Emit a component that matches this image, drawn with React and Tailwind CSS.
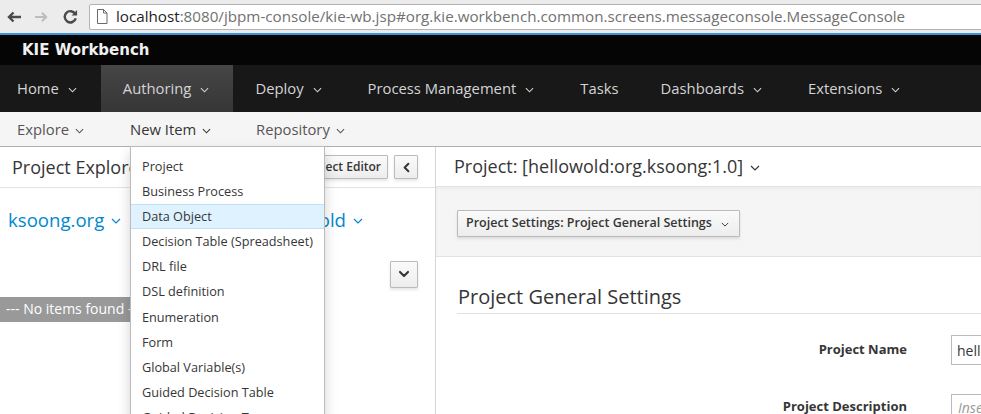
import { ChevronDown, ChevronLeft } from 'lucide-react'

const NAV = [
  { label: 'Home', menu: true },
  { label: 'Authoring', menu: true, active: true },
  { label: 'Deploy', menu: true },
  { label: 'Process Management', menu: true },
  { label: 'Tasks', menu: false },
  { label: 'Dashboards', menu: true },
  { label: 'Extensions', menu: true },
]

const NEW_ITEMS = [
  'Project',
  'Business Process',
  'Data Object',
  'Decision Table (Spreadsheet)',
  'DRL file',
  'DSL definition',
  'Enumeration',
  'Form',
  'Global Variable(s)',
  'Guided Decision Table',
  'Guided Decision Tree',
  'Guided Rule',
]

function Caret({ className = '' }) {
  return (
    <svg viewBox="0 0 10 6" className={className} fill="none" stroke="currentColor" strokeWidth="1.2">
      <path d="M1 1l4 4 4-4" />
    </svg>
  )
}

function BrowserBar() {
  return (
    <div className="h-[33px] bg-[#ececec] flex items-center">
      <div className="w-[89px] flex items-center shrink-0">
        {/* back */}
        <svg viewBox="0 0 16 12" className="w-[16px] h-[12px] ml-[6px]" fill="none" stroke="#4a4a4a" strokeWidth="2.4">
          <path d="M15 6H3M7.5 1.5L3 6l4.5 4.5" />
        </svg>
        {/* forward */}
        <svg viewBox="0 0 16 12" className="w-[15px] h-[12px] ml-[12px]" fill="none" stroke="#bdbdbd" strokeWidth="2.2">
          <path d="M1 6h12M8.5 1.5L13 6l-4.5 4.5" />
        </svg>
        {/* reload */}
        <svg viewBox="0 0 16 16" className="w-[15px] h-[15px] ml-[14px]" fill="none" stroke="#4a4a4a" strokeWidth="2.6">
          <path d="M13 5.2A6 6 0 1 0 13.6 10" />
          <path d="M15 1v5.8H9.2z" fill="#4a4a4a" stroke="none" />
        </svg>
      </div>
      <div className="h-[26px] flex-1 mr-[-4px] bg-white border border-[#b3b3b3] rounded-[2px] flex items-center">
        <svg viewBox="0 0 12 15" className="w-[12px] h-[15px] ml-[6px]" fill="#fff" stroke="#6a6a6a" strokeWidth="1">
          <path d="M1.5 0.5h6l3.5 3.5v10.5h-9.5z" />
          <path d="M7.5 0.5v3.5h3.5" fill="none" />
        </svg>
        <span className="ml-[8px] text-[15.2px] whitespace-nowrap font-['Open_Sans',sans-serif]">
          <span className="text-[#1e1e1e]">localhost</span>
          <span className="text-[#717171]">:8080/jbpm-console/kie-wb.jsp#org.kie.workbench.common.screens.messageconsole.MessageConsole</span>
        </span>
      </div>
    </div>
  )
}

function Btn({ children, className = '' }) {
  return (
    <div
      className={
        'flex items-center justify-center border border-[#bbb] rounded-[1px] bg-linear-to-b from-[#fafafa] to-[#ededed] shadow-[0_2px_3px_rgba(3,3,3,0.1)] text-[#363636] ' +
        className
      }
    >
      {children}
    </div>
  )
}

export default function App() {
  return (
    <div className="w-[981px] h-[414px] overflow-hidden bg-white font-['Open_Sans',sans-serif] text-[#363636]">
      <BrowserBar />
      <div className="h-[2px] bg-[#3a93dc]" />
      <div className="h-[30px] bg-[#050505] flex items-center pl-[22px]">
        <span className="font-['DejaVu_Sans',sans-serif] font-bold text-[15px] text-[#f0f0f0] leading-none mt-[1px]">
          KIE Workbench
        </span>
      </div>

      {/* primary nav */}
      <nav className="h-[47px] bg-[#181818] flex text-[14.8px] text-[#d4d4d4]">
        {NAV.map((n, i) => (
          <div
            key={n.label}
            className={[
              'h-full flex items-center',
              i === 0 ? 'pl-[17px]' : 'pl-[22px]',
              n.menu ? 'pr-[24px]' : 'pr-[20px]',
              n.active ? 'bg-linear-to-b from-[#464646] to-[#363636]' : '',
            ].join(' ')}
          >
            <span>{n.label}</span>
            {n.menu && <Caret className="w-[9px] h-[6px] ml-[9px] mt-[2px]" />}
          </div>
        ))}
      </nav>

      {/* secondary nav */}
      <div className="h-[35px] bg-[#f5f5f5] border-b border-[#b0b0b0] flex text-[14.8px] text-[#555] pt-[1px]">
        <div className="w-[130px] pl-[17px] flex items-center">
          Explore
          <Caret className="w-[9px] h-[6px] ml-[6px] mt-[2px]" />
        </div>
        <div className="relative w-[126px] flex items-center text-[#363636]">
          New Item
          <Caret className="w-[9px] h-[6px] ml-[6px] mt-[2px]" />
          <div className="absolute left-0 top-[33px] z-10 w-[195px] bg-white border border-[#bbb] shadow-[0_6px_12px_rgba(0,0,0,0.175)] pt-[7px] text-[12.7px] text-[#363636]">
            {NEW_ITEMS.map((t) => (
              <div
                key={t}
                className={
                  'h-[25.1px] px-[11px] flex items-center border-y whitespace-nowrap ' +
                  (t === 'Data Object' ? 'bg-[#def3ff] border-[#bee1f4]' : 'border-transparent')
                }
              >
                {t}
              </div>
            ))}
          </div>
        </div>
        <div className="flex items-center">
          Repository
          <Caret className="w-[9px] h-[6px] ml-[6px] mt-[2px]" />
        </div>
      </div>

      <div className="flex h-[267px]">
        {/* project explorer */}
        <div className="w-[436px] shrink-0 border-r border-[#d6d6d6]">
          <div className="h-[41px] border-b border-[#e2e2e2] flex items-center pl-[12px] pr-[17px]">
            <span className="text-[18px] flex-1 whitespace-nowrap">Project Explorer</span>
            <Btn className="h-[24px] px-[6px] text-[12px] font-semibold">Project Editor</Btn>
            <Btn className="w-[24px] h-[24px] ml-[6px]">
              <ChevronLeft size={15} strokeWidth={3.2} />
            </Btn>
          </div>
          <div className="flex items-center justify-between pl-[8px] pr-[72px] pt-[18px] text-[18.6px] text-[#0088ce]">
            <div className="flex items-center">
              ksoong.org
              <Caret className="w-[10px] h-[6px] ml-[7px] mt-[3px]" />
            </div>
            <div className="flex items-center">
              hellowold
              <Caret className="w-[10px] h-[6px] ml-[7px] mt-[3px]" />
            </div>
          </div>
          <div className="flex justify-end pr-[17px] mt-[27px]">
            <Btn className="w-[28px] h-[27px]">
              <ChevronDown size={16} strokeWidth={3.2} />
            </Btn>
          </div>
          <div className="mt-[9px] w-[160px] h-[25px] bg-[#999] text-white text-[14px] flex items-center pl-[6px] pb-[1px] whitespace-nowrap">
            --- No items found ---
          </div>
        </div>

        {/* project editor */}
        <div className="flex-1 min-w-0 overflow-hidden">
          <div className="h-[40px] border-b border-[#e2e2e2] flex items-center pl-[18px] text-[18px] whitespace-nowrap">
            Project: [hellowold:org.ksoong:1.0]
            <Caret className="w-[10px] h-[6px] ml-[7px] mt-[3px]" />
          </div>
          <div className="h-[70px] bg-[#f5f5f5] border-b border-[#e2e2e2] shadow-[inset_0_2px_3px_rgba(0,0,0,0.04)] pt-[23px] pl-[21px]">
            <Btn className="w-[283px] h-[27px] justify-start pl-[8px] text-[12.5px] font-semibold">
              Project Settings: Project General Settings
              <Caret className="w-[8px] h-[5px] ml-[9px] mt-[2px]" />
            </Btn>
          </div>
          <div className="pl-[21px]">
            <h3 className="mt-[29px] pl-[1px] text-[20px] leading-[22px] pb-[5px] border-b border-[#e2e2e2] whitespace-nowrap">
              Project General Settings
            </h3>
            <div className="flex items-center mt-[21px]">
              <div className="w-[450px] shrink-0 text-right text-[13px] font-bold">Project Name</div>
              <div className="ml-[44px] w-[200px] h-[30px] border border-[#bbb] flex items-center pl-[5px] text-[14px] shrink-0">
                hellowold
              </div>
            </div>
            <div className="flex items-start mt-[29px]">
              <div className="w-[450px] shrink-0 text-right text-[13px] font-bold pt-[3px]">Project Description</div>
              <div className="ml-[44px] w-[200px] h-[50px] border border-[#bbb] pl-[6px] pt-[2px] text-[14px] italic text-[#999] shrink-0">
                Insert description...
              </div>
            </div>
          </div>
        </div>
      </div>
    </div>
  )
}
